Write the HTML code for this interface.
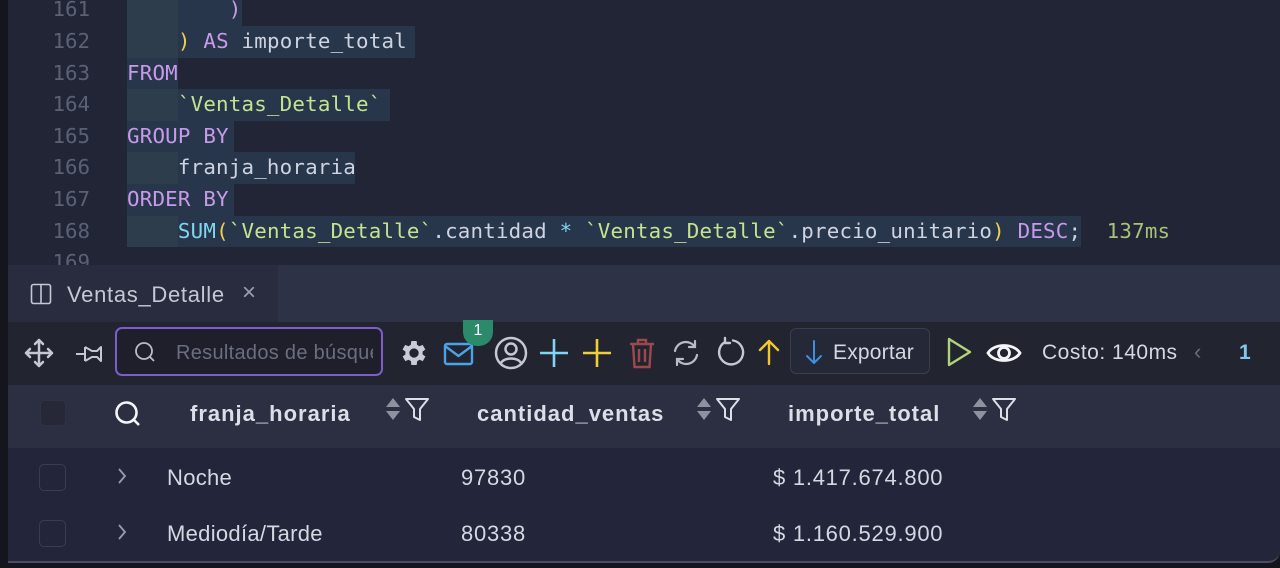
<!DOCTYPE html>
<html><head><meta charset="utf-8"><style>
*{margin:0;padding:0;box-sizing:border-box}
body{width:1280px;height:568px;overflow:hidden;background:#15161d;position:relative;font-family:"Liberation Sans",sans-serif}
.abs{position:absolute}
#editor{left:8px;top:0;width:1272px;height:265px;background:#222536}
.ln{position:absolute;left:40px;width:42px;text-align:right;color:#5b6174;font:20.8px "DejaVu Sans Mono",monospace;line-height:31.6px}
.code{position:absolute;font:20.8px "DejaVu Sans Mono",monospace;line-height:31.6px;white-space:pre;color:#cdd3e0;letter-spacing:0.2px}
.hl{position:absolute;background:#28364b;height:31.6px}
.ind{position:absolute;background:#2e3d4c;height:31.6px}
.k{color:#c79bea}.s{color:#c5e38f}.y{color:#f2cd4f}.f{color:#7fd6f2}.p{color:#c79bea}
#panel{left:8px;top:265px;width:1272px;height:298px;background:#23263a;border-bottom:2px solid #4a4e5e;border-bottom-right-radius:12px;overflow:hidden}
.hd{font-size:22px;color:#dcdfe8;font-weight:bold;letter-spacing:1px}
.cell{font-size:22px;color:#d4d8e2;letter-spacing:0.3px}
.num{font-size:22px;color:#d4d8e2;letter-spacing:0.75px}
</style></head><body>
<div id="editor" class="abs">
  <div class="ind" style="left:119px;top:-5.6px;width:51px"></div>
  <div class="hl" style="left:170px;top:-5.6px;width:64px"></div>
  <div class="ind" style="left:119px;top:26px;width:51px"></div>
  <div class="hl" style="left:170px;top:26px;width:237px"></div>
  <div class="hl" style="left:119px;top:57.6px;width:51px"></div>
  <div class="ind" style="left:119px;top:89.2px;width:51px"></div>
  <div class="hl" style="left:170px;top:89.2px;width:212px"></div>
  <div class="hl" style="left:119px;top:120.8px;width:107px"></div>
  <div class="ind" style="left:119px;top:152.4px;width:51px"></div>
  <div class="hl" style="left:170px;top:152.4px;width:177px"></div>
  <div class="hl" style="left:119px;top:184px;width:107px"></div>
  <div class="ind" style="left:119px;top:215.6px;width:51px"></div>
  <div class="hl" style="left:170px;top:215.6px;width:903px"></div>

  <div class="ln" style="top:-5.6px">161</div>
  <div class="ln" style="top:26px">162</div>
  <div class="ln" style="top:57.6px">163</div>
  <div class="ln" style="top:89.2px">164</div>
  <div class="ln" style="top:120.8px">165</div>
  <div class="ln" style="top:152.4px">166</div>
  <div class="ln" style="top:184px">167</div>
  <div class="ln" style="top:215.6px">168</div>
  <div class="ln" style="top:247.2px">169</div>

  <div class="code" style="left:119px;top:-5.6px">        <span class="p">)</span></div>
  <div class="code" style="left:119px;top:26px">    <span class="y">)</span> <span class="k">AS</span> importe_total</div>
  <div class="code" style="left:119px;top:57.6px"><span class="k">FROM</span></div>
  <div class="code" style="left:119px;top:89.2px">    <span class="s">`Ventas_Detalle`</span></div>
  <div class="code" style="left:119px;top:120.8px"><span class="k">GROUP BY</span></div>
  <div class="code" style="left:119px;top:152.4px">    franja_horaria</div>
  <div class="code" style="left:119px;top:184px"><span class="k">ORDER BY</span></div>
  <div class="code" style="left:119px;top:215.6px">    <span class="f">SUM</span><span class="y">(</span><span class="s">`Ventas_Detalle`</span>.cantidad <span class="f">*</span> <span class="s">`Ventas_Detalle`</span>.precio_unitario<span class="y">)</span> <span class="k">DESC</span>;  <span style="color:#a9c27a">137ms</span></div>
</div>

<div id="panel" class="abs">
  <div class="abs" style="left:0;top:0;width:1272px;height:57px;background:#2e3246"></div>
  <div class="abs" style="left:0;top:0;width:270px;height:57px;background:#292c3e"></div>
  <svg class="abs" style="left:22px;top:18px" width="22" height="22" viewBox="0 0 22 22"><rect x="1.5" y="1.5" width="19" height="19" rx="2" fill="none" stroke="#c4c8d4" stroke-width="1.6"/><line x1="11" y1="1.5" x2="11" y2="20.5" stroke="#c4c8d4" stroke-width="1.6"/></svg>
  <div class="abs" style="left:59px;top:17px;font-size:22px;color:#c4c8d4;letter-spacing:0.7px">Ventas_Detalle</div>
  <div class="abs" style="left:234px;top:14px;font-size:24px;color:#9a9eac;font-weight:300">×</div>

  <div class="abs" style="left:0;top:57px;width:1272px;height:63px;background:#22242f"></div>
  <svg class="abs" style="left:16px;top:72px" width="30" height="32" viewBox="0 0 30 32" fill="none" stroke="#c4c8d4" stroke-width="2.5" stroke-linecap="round" stroke-linejoin="round"><path d="M15 3v26M2 16h26M11 7l4-4 4 4M11 25l4 4 4-4M6 12l-4 4 4 4M24 12l4 4-4 4"/></svg>
  <svg class="abs" style="left:67px;top:76px" width="30" height="26" viewBox="0 0 30 26" fill="none" stroke="#c4c8d4" stroke-width="2" stroke-linejoin="round"><path d="M1 13h9M10 6v14M10 6l7 4h5l4-4v14l-4-4h-5l-7 4"/></svg>
  <div class="abs" style="left:107px;top:62px;width:268px;height:49px;border:2px solid #7d5ccc;border-radius:7px;background:#1e1f2b"></div>
  <svg class="abs" style="left:126px;top:76px" width="22" height="22" viewBox="0 0 22 22" fill="none" stroke="#b8bcc8" stroke-width="1.8"><circle cx="10" cy="10" r="8"/><path d="M16 16l4 4"/></svg>
  <div class="abs" style="left:168px;top:77px;font-size:20px;color:#6a6e7e;white-space:nowrap;width:197px;overflow:hidden;letter-spacing:0.3px">Resultados de búsqueda</div>
  <svg class="abs" style="left:390px;top:72px" width="32" height="32" viewBox="0 0 24 24"><path fill="#c8ccd6" d="M19.4 13a7.5 7.5 0 0 0 0-2l2.1-1.6-2-3.5-2.5 1a7 7 0 0 0-1.7-1L15 3h-4l-.4 2.9a7 7 0 0 0-1.7 1l-2.5-1-2 3.5L6.6 11a7.5 7.5 0 0 0 0 2l-2.1 1.6 2 3.5 2.5-1a7 7 0 0 0 1.7 1L11 21h4l.4-2.9a7 7 0 0 0 1.7-1l2.5 1 2-3.5zM13 15.5a3.5 3.5 0 1 1 0-7 3.5 3.5 0 0 1 0 7z" transform="translate(-1 0)"/></svg>
  <svg class="abs" style="left:435px;top:76px" width="32" height="26" viewBox="0 0 32 26" fill="none" stroke="#4aa3e6" stroke-width="2.4" stroke-linejoin="round"><rect x="2" y="3" width="27" height="20" rx="2"/><path d="M2 5l13.5 10L29 5"/></svg>
  <div class="abs" style="left:455px;top:55px;width:30px;height:26px;border-radius:0 0 14px 14px;background:#2a8a6a;color:#fff;font-size:16px;text-align:center;line-height:22px">1</div>
  <svg class="abs" style="left:485px;top:70px" width="36" height="36" viewBox="0 0 36 36" fill="none" stroke="#c4c8d4" stroke-width="2.5"><circle cx="18" cy="18" r="15"/><circle cx="18" cy="14" r="5.5"/><path d="M8 28c3-6 17-6 20 0"/></svg>
  <svg class="abs" style="left:531px;top:73px" width="30" height="30" viewBox="0 0 30 30" stroke="#7fd6f2" stroke-width="2.6"><path d="M15 1v28M1 15h28"/></svg>
  <svg class="abs" style="left:574px;top:73px" width="30" height="30" viewBox="0 0 30 30" stroke="#f2cd3a" stroke-width="2.6"><path d="M15 1v28M1 15h28"/></svg>
  <svg class="abs" style="left:620px;top:72px" width="28" height="32" viewBox="0 0 28 32" fill="none" stroke="#9a4a4e" stroke-width="2.4"><path d="M2 7h24M10 7V3h8v4M5 7l1.5 23h15L23 7M11 12v13M17 12v13"/></svg>
  <svg class="abs" style="left:662px;top:73px" width="32" height="30" viewBox="0 0 32 30" fill="none" stroke="#b8bcc8" stroke-width="2.2" stroke-linecap="round"><path d="M5 13a11 11 0 0 1 20-4M27 17a11 11 0 0 1-20 4M25 3v6h-6M7 27v-6h6"/></svg>
  <svg class="abs" style="left:707px;top:71px" width="32" height="32" viewBox="0 0 32 32" fill="none" stroke="#c4c8d4" stroke-width="2.4" stroke-linecap="round"><path d="M10 6a12 12 0 1 0 8-1.5M10 2v5h5"/></svg>
  <svg class="abs" style="left:750px;top:73px" width="22" height="28" viewBox="0 0 22 28" fill="none" stroke="#f2c72e" stroke-width="2.4" stroke-linecap="round" stroke-linejoin="round"><path d="M11 26V3M2 12l9-9 9 9"/></svg>
  <div class="abs" style="left:782px;top:63px;width:140px;height:46px;border:1.5px solid #3a3d4c;border-radius:6px;background:#252836"></div>
  <svg class="abs" style="left:797px;top:74px" width="18" height="26" viewBox="0 0 18 26" fill="none" stroke="#3f8fe0" stroke-width="2" stroke-linecap="round" stroke-linejoin="round"><path d="M9 2v22M2 17l7 7 7-7"/></svg>
  <div class="abs" style="left:825px;top:76px;font-size:21px;color:#d4d8e2;letter-spacing:0.2px">Exportar</div>
  <svg class="abs" style="left:937px;top:71px" width="28" height="32" viewBox="0 0 28 32" fill="none" stroke="#b2d37a" stroke-width="2.4" stroke-linejoin="round"><path d="M4 3v26l21-13z"/></svg>
  <svg class="abs" style="left:978px;top:75px" width="36" height="26" viewBox="0 0 36 26" fill="none" stroke="#f4f5f8" stroke-width="2.8"><path d="M2 13C8 3 28 3 34 13C28 23 8 23 2 13z"/><circle cx="18" cy="13" r="5.5"/></svg>
  <div class="abs" style="left:1034px;top:76px;font-size:21px;color:#d4d8e2;letter-spacing:0.5px">Costo: 140ms</div>
  <div class="abs" style="left:1186px;top:74px;font-size:22px;color:#6a6e7e">‹</div>
  <div class="abs" style="left:1231px;top:76px;font-size:21px;color:#7fc6f0;font-weight:bold">1</div>

  <div class="abs" style="left:0;top:120px;width:1272px;height:63px;background:#2c2f42"></div>
  <div class="abs" style="left:32px;top:135px;width:26px;height:26px;border-radius:5px;background:#262838;border:1px solid #2f3244"></div>
  <svg class="abs" style="left:106px;top:135px" width="28" height="28" viewBox="0 0 28 28" fill="none" stroke="#f4f5f8" stroke-width="2.6"><circle cx="12.5" cy="12.5" r="10"/><path d="M20 20l5 5"/></svg>
  <div class="abs hd" style="left:182px;top:136px">franja_horaria</div>
  <div class="abs hd" style="left:469px;top:136px">cantidad_ventas</div>
  <div class="abs hd" style="left:780px;top:136px">importe_total</div>
  <svg class="abs" style="left:376px;top:131px" width="50" height="28" viewBox="0 0 50 28"><path d="M2 11l7-9 7 9z M2 15l7 9 7-9z" fill="#8e92a0"/><path d="M22 3h22l-8 10v11l-6-3v-8z" fill="none" stroke="#dcdfe8" stroke-width="2" stroke-linejoin="round"/></svg>
  <svg class="abs" style="left:687px;top:131px" width="50" height="28" viewBox="0 0 50 28"><path d="M2 11l7-9 7 9z M2 15l7 9 7-9z" fill="#8e92a0"/><path d="M22 3h22l-8 10v11l-6-3v-8z" fill="none" stroke="#dcdfe8" stroke-width="2" stroke-linejoin="round"/></svg>
  <svg class="abs" style="left:963px;top:131px" width="50" height="28" viewBox="0 0 50 28"><path d="M2 11l7-9 7 9z M2 15l7 9 7-9z" fill="#8e92a0"/><path d="M22 3h22l-8 10v11l-6-3v-8z" fill="none" stroke="#dcdfe8" stroke-width="2" stroke-linejoin="round"/></svg>

  <div class="abs" style="left:31px;top:199px;width:27px;height:27px;border-radius:5px;border:1.5px solid #3a3d4e"></div>
  <div class="abs" style="left:31px;top:255px;width:27px;height:27px;border-radius:5px;border:1.5px solid #3a3d4e"></div>
  <svg class="abs" style="left:108px;top:201px" width="12" height="20" viewBox="0 0 12 20" fill="none" stroke="#9a9eac" stroke-width="1.8"><path d="M3 3l6 7-6 7"/></svg>
  <svg class="abs" style="left:108px;top:257px" width="12" height="20" viewBox="0 0 12 20" fill="none" stroke="#9a9eac" stroke-width="1.8"><path d="M3 3l6 7-6 7"/></svg>
  <div class="abs cell" style="left:159px;top:200px">Noche</div>
  <div class="abs num" style="left:453px;top:200px">97830</div>
  <div class="abs num" style="left:765px;top:200px">$ 1.417.674.800</div>
  <div class="abs cell" style="left:159px;top:256px">Mediodía/Tarde</div>
  <div class="abs num" style="left:453px;top:256px">80338</div>
  <div class="abs num" style="left:765px;top:256px">$ 1.160.529.900</div>
</div>
</body></html>
